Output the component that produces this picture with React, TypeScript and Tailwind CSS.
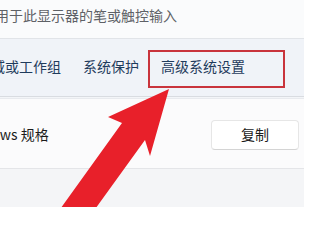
import React from "react";

const font = { fontFamily: '"Noto Sans CJK SC", "Noto Sans", sans-serif' };

function Arrow() {
  return (
    <svg
      className="absolute left-0 top-0 pointer-events-none"
      width="304"
      height="207"
      viewBox="0 0 304 207"
    >
      <polygon
        points="58,212 122,123 108,117 169,89 150,156 145,140 93,212"
        fill="#e8202a"
      />
    </svg>
  );
}

export default function App() {
  return (
    <div
      className="relative w-[304px] h-[207px] overflow-hidden bg-[#f4f5f7] text-[14px]"
      style={font}
    >
      {/* description line */}
      <div className="h-[39px] bg-[#fafbfc] flex items-start pt-[5px] border-b border-[#e1e4e8] whitespace-nowrap">
        <span className="-ml-[47px] text-[#5e6166] leading-[20px]">
          没有可用于此显示器的笔或触控输入
        </span>
      </div>

      {/* related links */}
      <div className="h-[58px] bg-[#f0f3f8] flex items-center gap-[22px] pb-[2px] border-b border-[#d9dce1] whitespace-nowrap">
        <span className="-ml-[9px] text-[#1f3b5c]">域或工作组</span>
        <span className="text-[#1f3b5c]">系统保护</span>
        <span className="text-[#1f3b5c]">高级系统设置</span>
      </div>
      <div className="h-[2px] bg-[#f3f5f8] border-b border-[#e8eaee]" />

      {/* windows spec card */}
      <div className="h-[70px] bg-[#fbfbfc] border-b border-[#e4e5e8] flex items-center justify-between pt-[2px] pr-[5px] whitespace-nowrap">
        <span className="-ml-[42px] text-[#1b1b1b]">Windows 规格</span>
        <button
          type="button"
          className="w-[88px] h-[30px] rounded-[4px] bg-white border border-[#e6e6e6] border-b-[#d4d4d4] text-[#1b1b1b] text-[14px]"
        >
          复制
        </button>
      </div>

      {/* annotation */}
      <div className="absolute left-[148px] top-[50px] w-[137px] h-[38px] border-2 border-[#c9343c]" />
      <Arrow />
    </div>
  );
}
